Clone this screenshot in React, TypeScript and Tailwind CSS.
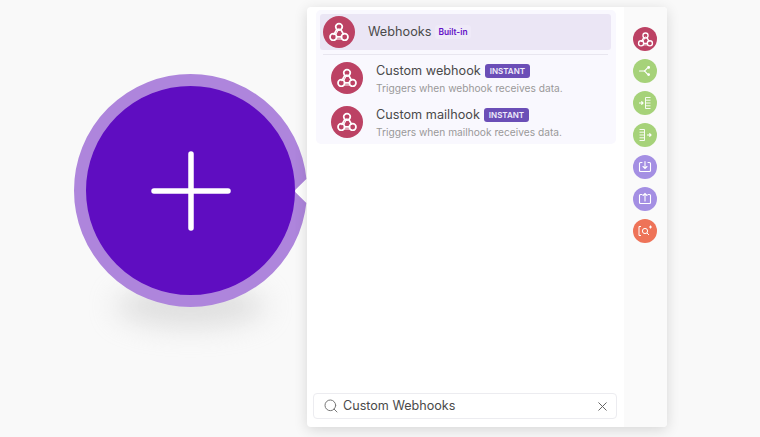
import { Search, X } from "lucide-react";

function HookIcon({ size }: { size: number }) {
  return (
    <svg width={size} height={size} viewBox="0 0 24 24" fill="none" stroke="white" strokeWidth="1.9" strokeLinecap="round">
      <circle cx="12" cy="6.4" r="3.6" />
      <circle cx="5.8" cy="17.4" r="3.6" />
      <circle cx="18.2" cy="17.4" r="3.6" />
      <path d="M9.6 9.2 6.6 14.6" />
      <path d="M14 9.4 16.8 14.2" />
      <path d="M9.4 17.4h5.2" />
      <path d="M12 8.2 8.6 14.4" strokeWidth="1.2" />
      <path d="M9.2 19.6h5.6" strokeWidth="1.2" />
    </svg>
  );
}

function BranchIcon() {
  return (
    <svg width="14" height="14" viewBox="0 0 14 14" fill="none" stroke="white" strokeWidth="1.1" strokeLinecap="round">
      <path d="M1.5 7h5" />
      <path d="M9.5 3.8 6.5 7l3 3.2" />
      <circle cx="10.6" cy="3.4" r="0.9" fill="white" />
      <circle cx="10.6" cy="10.6" r="0.9" fill="white" />
    </svg>
  );
}

function ListIcon({ flip }: { flip?: boolean }) {
  return (
    <svg width="14" height="14" viewBox="0 0 14 14" fill="none" stroke="white" strokeWidth="0.9">
      {flip ? (
        <>
          <path d="M1.5 1.5h5v11h-5M1.5 4.2h5M1.5 7h5M1.5 9.8h5" />
          <path d="M9 7h4M11.4 5.4 13 7l-1.6 1.6" strokeWidth="1.2" />
        </>
      ) : (
        <>
          <path d="M12.5 1.5h-5v11h5M7.5 4.2h5M7.5 7h5M7.5 9.8h5" />
          <path d="M1 7h4M3.4 5.4 5 7 3.4 8.6" strokeWidth="1.2" />
        </>
      )}
    </svg>
  );
}

function BracketSearch() {
  return (
    <svg width="15" height="14" viewBox="0 0 15 14" fill="none" stroke="white" strokeWidth="1">
      <path d="M3 2.5H1v9h2" />
      <circle cx="7" cy="7" r="2.6" />
      <path d="M9 9l2 2" />
      <path d="M12.5 1.5v3M11 3h3" />
    </svg>
  );
}

function TrayIcon({ up }: { up?: boolean }) {
  return (
    <svg width="14" height="14" viewBox="0 0 14 14" fill="none" stroke="white" strokeWidth="1.1" strokeLinecap="round">
      <path d="M4 2.5H2.5a1 1 0 0 0-1 1v7a1 1 0 0 0 1 1h9a1 1 0 0 0 1-1v-7a1 1 0 0 0-1-1H10" />
      {up ? <path d="M7 9V1.5M5 3.5l2-2 2 2" /> : <path d="M7 1.5V8.5M5 6.5l2 2 2-2" />}
    </svg>
  );
}

const rail = [
  { bg: "bg-[#bc4264]", icon: <HookIcon size={17} /> },
  { bg: "bg-[#a6d279]", icon: <BranchIcon /> },
  { bg: "bg-[#a6d279]", icon: <ListIcon /> },
  { bg: "bg-[#a6d279]", icon: <ListIcon flip /> },
  { bg: "bg-[#a48fe3]", icon: <TrayIcon /> },
  { bg: "bg-[#a48fe3]", icon: <TrayIcon up /> },
  { bg: "bg-[#ee7358]", icon: <BracketSearch /> },
];

const modules = [
  { title: "Custom webhook", desc: "Triggers when webhook receives data." },
  { title: "Custom mailhook", desc: "Triggers when mailhook receives data." },
];

export default function App() {
  return (
    <div className="relative h-[437px] w-[760px] overflow-hidden bg-[#f9f9f9] font-['Inter',sans-serif]">
      {/* add-module node */}
      <div className="absolute left-[115px] top-[285px] h-[42px] w-[151px] rounded-[50%] bg-[#c4c4c4] opacity-50 blur-[14px]" />
      <div className="absolute left-[74px] top-[74px] flex h-[233px] w-[233px] items-center justify-center rounded-full border-[12.5px] border-[#ae85dc] bg-[#5f0dc1]">
        <svg width="80" height="80" viewBox="0 0 80 80" fill="none" stroke="white" strokeWidth="5.5" strokeLinecap="round">
          <path d="M40 3v74M3 40h74" />
        </svg>
      </div>

      {/* popover */}
      <div className="absolute left-[298px] top-[182px] h-[18px] w-[18px] rotate-45 rounded-[2px] bg-white" />
      <div className="absolute left-[307px] top-[7px] flex h-[420px] w-[360px] rounded-[4px] bg-white shadow-[0_3px_14px_rgba(0,0,0,0.14)]">
        <div className="flex w-[317px] flex-col px-[6px] pb-[8px] pt-[3px]">
          <div className="ml-[3px] w-[300px] rounded-[5px] bg-[#f9f8fe] pb-[1px] pl-[4px] pr-[5px] pt-[4px]">
            <div className="flex h-[36px] items-center rounded-[3px] bg-[#ebe6f5] pl-[3px]">
              <div className="flex h-[32px] w-[32px] shrink-0 items-center justify-center rounded-full bg-[#bc4264]">
                <HookIcon size={22} />
              </div>
              <span className="ml-[13px] text-[12.7px] leading-[16px] text-[#4a4a4a]">Webhooks</span>
              <span className="ml-[4px] rounded-[3px] bg-[#efeaf8] px-[3px] py-[1px] text-[8.4px] font-semibold leading-[12px] text-[#6411c7]">
                Built-in
              </span>
            </div>
            <div className="mx-[3px] mt-[4px] border-t border-[#e8e6ef]" />
            <div className="mt-[2px] flex flex-col gap-[2px] pl-[11px]">
              {modules.map((m) => (
                <div key={m.title} className="flex h-[42px] items-center">
                  <div className="flex h-[32px] w-[32px] shrink-0 items-center justify-center rounded-full bg-[#bc4264]">
                    <HookIcon size={22} />
                  </div>
                  <div className="ml-[13px]">
                    <div className="flex h-[20px] items-center">
                      <span className="text-[12.7px] text-[#4a4a4a]">{m.title}</span>
                      <span className="ml-[4px] rounded-[3px] bg-[#6b4eb7] px-[5px] text-[8px] font-semibold leading-[14px] text-[#f0ecfa]">
                        INSTANT
                      </span>
                    </div>
                    <div className="text-[10.2px] leading-[14px] text-[#999]">{m.desc}</div>
                  </div>
                </div>
              ))}
            </div>
          </div>
          <div className="mt-auto flex h-[26px] w-[304px] items-center rounded-[4px] border border-[#ececf0] bg-white pl-[9px] pr-[6px]">
            <Search size={16} color="#777" strokeWidth={1.5} />
            <span className="ml-[4px] text-[12.6px] text-[#4a4a4a]">Custom Webhooks</span>
            <X size={15} color="#666" strokeWidth={1.6} className="ml-auto" />
          </div>
        </div>
        <div className="flex flex-1 flex-col items-center gap-[8px] rounded-r-[4px] bg-[#fafafa] pr-[1px] pt-[20px]">
          {rail.map((r, i) => (
            <div key={i} className={`${r.bg} flex h-[24px] w-[24px] items-center justify-center rounded-full`}>
              {r.icon}
            </div>
          ))}
        </div>
      </div>
    </div>
  );
}
